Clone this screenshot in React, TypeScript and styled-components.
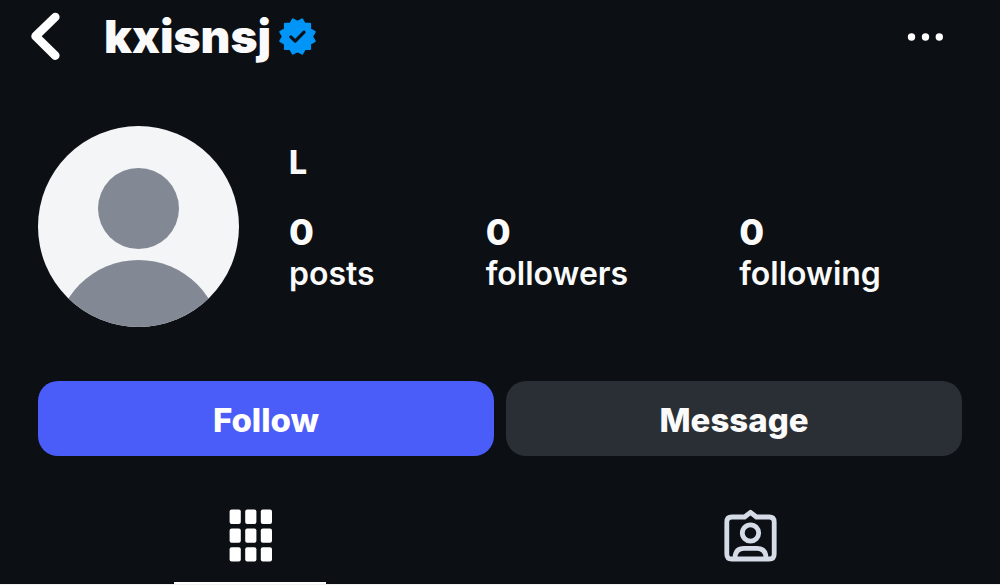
import styled, { createGlobalStyle } from 'styled-components';

const GlobalStyle = createGlobalStyle`
  *,
  *::before,
  *::after {
    box-sizing: border-box;
  }

  body {
    margin: 0;
    background: #0c0f14;
    color: #fafafa;
    font-family: Inter, 'Liberation Sans', sans-serif;
  }
`;

const Page = styled.div`
  display: flex;
  flex-direction: column;
  border-bottom: 1px solid #f0f1f3;
`;

const Header = styled.header`
  display: flex;
  align-items: center;
  height: 72px;
  padding: 0 52px 0 28px;
`;

const IconButton = styled.button`
  display: flex;
  padding: 0;
  border: none;
  background: none;
  color: #fff;
  cursor: pointer;
`;

const Username = styled.h1`
  margin: 0 8px 0 40px;
  font-size: 46px;
  font-weight: 900;
  line-height: 54px;
`;

const Spacer = styled.div`
  flex: 1;
`;

const Profile = styled.section`
  display: flex;
  gap: 50px;
  padding: 54px 38px 0;
`;

const Details = styled.div`
  padding-top: 17px;
`;

const FullName = styled.h2`
  margin: 0;
  font-size: 32px;
  font-weight: 800;
  line-height: 40px;
`;

const Stats = styled.ul`
  display: flex;
  gap: 111px;
  margin: 27px 0 0;
  padding: 0;
  list-style: none;
`;

const StatLink = styled.a`
  display: flex;
  flex-direction: column;
  color: inherit;
  text-decoration: none;
`;

const StatValue = styled.span`
  font-size: 36px;
  font-weight: 800;
  line-height: 44px;
`;

const StatLabel = styled.span`
  font-size: 32px;
  font-weight: 600;
  line-height: 40px;
`;

const Actions = styled.div`
  display: grid;
  grid-template-columns: 1fr 1fr;
  gap: 12px;
  padding: 54px 38px 0;
`;

const ActionButton = styled.button<{ $primary?: boolean }>`
  height: 75px;
  padding: 2px 0 0;
  border: none;
  border-radius: 20px;
  background: ${props => (props.$primary ? '#4a5df9' : '#2a2e35')};
  color: ${props => (props.$primary ? '#fff' : '#fafafa')};
  font-family: inherit;
  font-size: 33px;
  font-weight: 800;
  cursor: pointer;
`;

const Tabs = styled.nav`
  display: grid;
  grid-template-columns: 1fr 1fr;
  margin-top: 53px;
`;

const Tab = styled.button<{ $active?: boolean }>`
  display: flex;
  justify-content: center;
  justify-self: center;
  width: 152px;
  height: 75px;
  padding: 0;
  border: none;
  border-bottom: 2px solid ${props => (props.$active ? '#fff' : 'transparent')};
  background: none;
  color: ${props => (props.$active ? '#fff' : '#d5dbe7')};
  cursor: pointer;
`;

const stats = [
  { label: 'posts', value: 0 },
  { label: 'followers', value: 0 },
  { label: 'following', value: 0 },
];

function BackIcon() {
  return (
    <svg width="36" height="52" viewBox="0 0 36 52" fill="none" aria-hidden="true">
      <path
        d="M27.3 7 7.6 26.2l19.7 19.4"
        stroke="currentColor"
        strokeWidth="8.6"
        strokeLinecap="round"
        strokeLinejoin="round"
      />
    </svg>
  );
}

function VerifiedIcon() {
  return (
    <svg width="37" height="37" viewBox="0 0 40 40" role="img" aria-label="Verified">
      <path
        d="M20 4.3 15 1.4 12.3 6.2H6.4v5.9L1.4 15l2.9 5-2.9 5 5 2.9v5.7h5.7L15 38.6l5-2.9 5 2.9 2.9-5h5.7v-5.7l5-2.9-2.9-5 2.9-5-5-2.9V6.2h-5.9L25 1.4Z"
        fill="#0095f6"
        stroke="#0095f6"
        strokeWidth="2.2"
        strokeLinejoin="round"
      />
      <path
        d="m12.8 20.4 4.7 4.6 9.6-9.8"
        fill="none"
        stroke="#0c0f14"
        strokeWidth="3.4"
        strokeLinecap="round"
        strokeLinejoin="round"
      />
    </svg>
  );
}

function MoreIcon() {
  return (
    <svg width="44" height="12" viewBox="0 0 44 12" fill="currentColor" aria-hidden="true">
      <circle cx="7.5" cy="7" r="3.7" />
      <circle cx="21.5" cy="7" r="3.7" />
      <circle cx="35.3" cy="7" r="3.7" />
    </svg>
  );
}

function DefaultAvatar() {
  return (
    <svg width="201" height="201" viewBox="0 0 201 201" role="img" aria-label="Profile photo">
      <clipPath id="avatar-clip">
        <circle cx="100.5" cy="100.5" r="100.5" />
      </clipPath>
      <g clipPath="url(#avatar-clip)">
        <rect width="201" height="201" fill="#f3f5f7" />
        <circle cx="100.5" cy="82.5" r="40.5" fill="#838994" />
        <circle cx="100.5" cy="217" r="83" fill="#838994" />
      </g>
    </svg>
  );
}

function GridIcon() {
  const columns = [0, 15.6, 31.2];
  const rows = [0, 18.8, 37.6];

  return (
    <svg width="43" height="53" viewBox="0 0 43 53" fill="currentColor" aria-hidden="true">
      {rows.map(y =>
        columns.map(x => (
          <rect key={`${x}-${y}`} x={x + 0.6} y={y + 0.6} width="11.2" height="14.4" rx="2" />
        ))
      )}
    </svg>
  );
}

function TaggedIcon() {
  return (
    <svg
      width="53"
      height="53"
      viewBox="0 0 53 53"
      fill="none"
      stroke="currentColor"
      strokeWidth="4.8"
      strokeLinejoin="round"
      aria-hidden="true"
    >
      <path d="M7.800 8H20.600L26.500 3.300L32.400 8H45.200Q50.200 8 50.200 13V45Q50.200 50 45.200 50H7.800Q2.800 50 2.800 45V13Q2.800 8 7.800 8Z" />
      <circle cx="26.500" cy="24" r="8.200" />
      <path d="M11 50V48.500Q11.500 39.300 20 39.300H33Q41.500 39.300 42 48.500V50" />
    </svg>
  );
}

export default function App() {
  return (
    <>
      <GlobalStyle />
      <Page>
        <Header>
          <IconButton aria-label="Back">
            <BackIcon />
          </IconButton>
          <Username>kxisnsj</Username>
          <VerifiedIcon />
          <Spacer />
          <IconButton aria-label="More options">
            <MoreIcon />
          </IconButton>
        </Header>

        <Profile>
          <DefaultAvatar />
          <Details>
            <FullName>L</FullName>
            <Stats>
              {stats.map(stat => (
                <li key={stat.label}>
                  <StatLink href={`#${stat.label}`}>
                    <StatValue>{stat.value}</StatValue>
                    <StatLabel>{stat.label}</StatLabel>
                  </StatLink>
                </li>
              ))}
            </Stats>
          </Details>
        </Profile>

        <Actions>
          <ActionButton $primary>Follow</ActionButton>
          <ActionButton>Message</ActionButton>
        </Actions>

        <Tabs>
          <Tab $active aria-label="Posts">
            <GridIcon />
          </Tab>
          <Tab aria-label="Tagged">
            <TaggedIcon />
          </Tab>
        </Tabs>
      </Page>
    </>
  );
}
